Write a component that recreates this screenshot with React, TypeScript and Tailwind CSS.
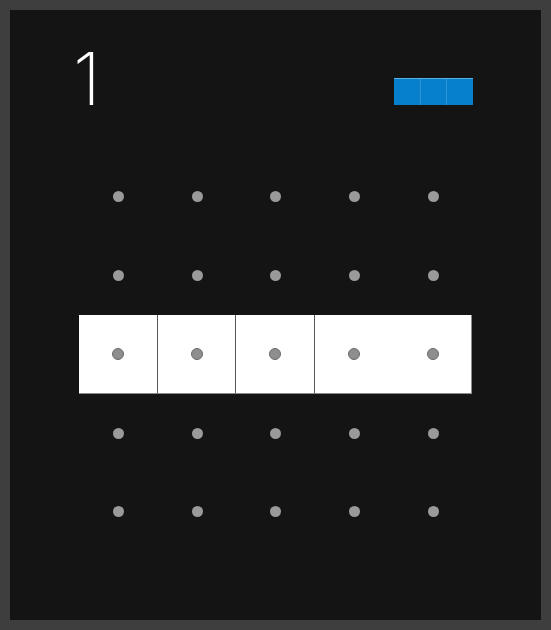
import React from 'react';

const rows = [0, 1, 2, 3, 4];
const cols = [0, 1, 2, 3, 4];

const App = () => {
  return (
    <div className="w-[551px] h-[630px] bg-[#3e3e3e] p-[10px]" style={{ fontFamily: 'Inter, "Liberation Sans", sans-serif' }}>
      <div className="h-full bg-[#141414] pl-[69px] pt-[32px]">
        <div className="w-[394px]">
          <div className="flex items-start justify-between h-[73px]">
            <span className="ml-[-6px] text-[73px] leading-none font-extralight text-white">1</span>
            <div className="mt-[36px] flex w-[79px] h-[27px] border-t border-[#5ab2e4] bg-[#0680cb]">
              <div className="flex-1 border-r border-[#2d95d6]" />
              <div className="flex-1 border-r border-[#2d95d6]" />
              <div className="flex-1" />
            </div>
          </div>
          <div className="mt-[42.6px] grid grid-cols-5 w-[393.5px]">
            {rows.map((r) =>
              cols.map((c) => {
                const lit = r === 2;
                return (
                  <div
                    key={`${r}-${c}`}
                    className={
                      lit
                        ? `h-[78.7px] flex items-center justify-center bg-white border-b border-[#8c8c8c] ${c < 3 ? 'border-r border-r-[#555555]' : ''} ${c === 4 ? 'border-r border-r-[#8c8c8c]' : ''}`
                        : 'h-[78.7px] flex items-center justify-center'
                    }
                  >
                    {lit ? (
                      <div className="w-[12px] h-[12px] rounded-full bg-[#8e8e8e] border border-[#6a6a6a]" />
                    ) : (
                      <div className="w-[11px] h-[11px] rounded-full bg-[#9a9a9a]" />
                    )}
                  </div>
                );
              })
            )}
          </div>
        </div>
      </div>
    </div>
  );
};

export default App;
